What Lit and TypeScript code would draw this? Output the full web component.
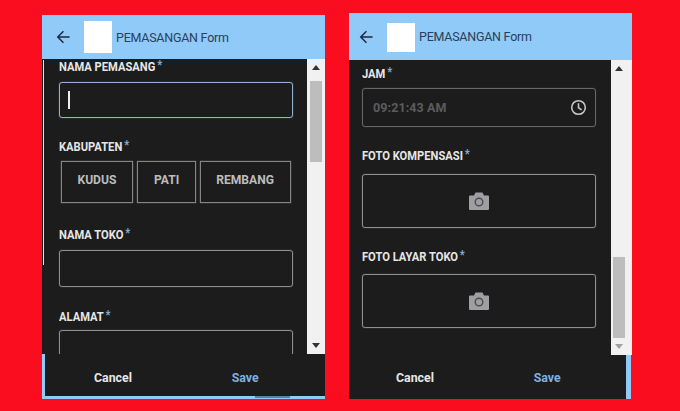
import { LitElement, html, css, svg } from "lit";
import { customElement } from "lit/decorators.js";

const back = html`<svg class="back" viewBox="0 0 16 16" width="14" height="14"><path d="M15.500 8H2M8.500 1.500L2 8l6.500 6.500" fill="none" stroke="#1b2a3d" stroke-width="1.700"/></svg>`;
const camera = html`<svg viewBox="0 0 20 18" width="20" height="18"><path fill="#9f9fa3" d="M1 3.500h4l1.500-3h7l1.500 3h4a1 1 0 0 1 1 1V17a1 1 0 0 1-1 1H1a1 1 0 0 1-1-1V4.500a1 1 0 0 1 1-1z"/><circle cx="10" cy="10" r="3.800" fill="none" stroke="#4c4c50" stroke-width="1.400"/></svg>`;
const clock = html`<svg viewBox="0 0 18 18" width="17" height="17"><circle cx="9" cy="9" r="7.200" fill="none" stroke="#c4c4c4" stroke-width="1.700"/><path d="M9 4.500V9.300l3.300 2.200" fill="none" stroke="#c4c4c4" stroke-width="1.700"/></svg>`;
const tri = (up: boolean, c: string) => html`<svg viewBox="0 0 8 5" width="8" height="5">${svg`<path fill=${c} d=${up ? "M4 0l4 5H0z" : "M0 0h8L4 5z"}/>`}</svg>`;

@customElement("app-root")
export class AppRoot extends LitElement {
  static styles = css`
    :host { display: block; width: 680px; height: 411px; background: #fb0d20; overflow: hidden; font-family: Roboto, "Liberation Sans", sans-serif; }
    .page { display: flex; align-items: flex-start; padding-left: 42px; gap: 24px; }
    .panel { position: relative; width: 283px; display: flex; flex-direction: column; }
    .a { margin-top: 15px; height: 384px; }
    .b { margin-top: 13px; height: 386px; }
    header { flex: none; display: flex; align-items: center; background: #90caf9; color: #2b4058; font-size: 12.500px; letter-spacing: -.25px; }
    .a header { height: 44px; padding-left: 14px; }
    .b header { height: 47px; padding-left: 10px; }
    .back { flex: none; margin-right: 14px; }
    .logo { flex: none; background: #fff; margin-right: 4px; }
    .a .logo { width: 28px; height: 32px; }
    .b .logo { width: 28px; height: 29px; margin-top: 2px; }
    .main { flex: none; height: 295px; display: flex; }
    .scroll-body { flex: 1; min-width: 0; overflow: hidden; background: #1c1c1c; padding: 1px 14px 0 17px; }
    .b .scroll-body { padding: 7px 15px 0 13px; }
    .bar { flex: none; width: 18px; box-sizing: border-box; background: #f1f1f1; display: flex; flex-direction: column; align-items: center; }
    .b .bar { width: 21px; padding-right: 5px; }
    .arrow { flex: none; height: 17px; display: flex; align-items: center; justify-content: center; }
    .track { flex: 1; width: 100%; display: flex; flex-direction: column; padding: 0 3px; box-sizing: border-box; }
    .b .track { padding: 0 2px; }
    .thumb { background: #bdbdbd; height: 81px; margin-top: 5px; }
    .b .thumb { margin-top: auto; }
    .label { font-size: 12px; font-weight: 700; color: #e6e6e6; height: 14px; line-height: 14px; white-space: nowrap; transform: scaleX(.93); transform-origin: left; }
    .label span { color: #7fb0dc; margin-left: 2px; position: relative; top: -2px; }
    .field { height: 37px; box-sizing: border-box; border: 1px solid #8e8e8e; box-shadow: 0 0 1px #8e8e8e; border-radius: 3px; margin: 8px 0 23px; display: flex; align-items: center; padding: 0 10px; }
    .focus { height: 36px; margin-bottom: 22px; border-color: #93b0cc; box-shadow: 0 0 1px #93b0cc; padding-left: 8px; }
    .caret { width: 1.500px; height: 18px; background: #eee; }
    .clip { height: 60px; margin: 6px 0 0; }
    .group { display: flex; gap: 4px; padding: 0 2px; margin: 7px 0 25px; }
    .group div { height: 42px; box-sizing: border-box; border: 1px solid #858585; box-shadow: 0 0 1px #858585; display: flex; align-items: center; justify-content: center; color: #bdbdbd; font-size: 13px; font-weight: 700; padding-bottom: 6px; }
    .group span { transform: scaleX(.93); }
    .time { height: 39px; margin: 7px 0 22px; border-color: #666; box-shadow: 0 0 1px #666; justify-content: space-between; color: #5c5c5c; font-size: 12.500px; font-weight: 700; letter-spacing: .1px; padding: 0 8px 0 10px; }
    .photo { height: 54px; margin: 11px 0 22px; justify-content: center; border-color: #909090; box-shadow: 0 0 1px #909090; padding-right: 10px; }
    .second { margin-top: 10px; }
    footer { flex: none; display: grid; grid-template-columns: 132px 132px; align-items: center; box-sizing: border-box; background: #1c1c1c; font-size: 13px; font-weight: 700; color: #e6e6e6; }
    .a footer { height: 45px; padding: 4px 0 0 2px; border-left: 3px solid #90caf9; border-bottom: 3px solid #90caf9; }
    .b footer { height: 44px; padding-top: 1px; margin-right: 1px; border-right: 5px solid #90caf9; }
    footer div { justify-self: center; transform: scaleX(.95); }
    footer .save { color: #7fb0e0; }
    .edge { position: absolute; left: 1px; top: 45px; width: 1px; height: 205px; background: #cfe8dc; }
    .tab { position: absolute; left: 213px; bottom: 1px; width: 35px; height: 2px; background: #5f7f9f; }
  `;

  private label(t: string) { return html`<div class="label">${t}<span>*</span></div>`; }

  render() {
    return html`<div class="page">
      <section class="panel a">
        <header>${back}<div class="logo"></div>PEMASANGAN Form</header>
        <div class="main">
          <div class="scroll-body">
            ${this.label("NAMA PEMASANG")}
            <div class="field focus"><div class="caret"></div></div>
            ${this.label("KABUPATEN")}
            <div class="group">
              <div style="width:72px"><span>KUDUS</span></div><div style="width:59px"><span>PATI</span></div><div style="width:91px"><span>REMBANG</span></div>
            </div>
            ${this.label("NAMA TOKO")}
            <div class="field"></div>
            ${this.label("ALAMAT")}
            <div class="field clip"></div>
          </div>
          <div class="bar">
            <div class="arrow">${tri(true, "#333")}</div>
            <div class="track"><div class="thumb"></div></div>
            <div class="arrow">${tri(false, "#333")}</div>
          </div>
        </div>
        <footer><div>Cancel</div><div class="save">Save</div></footer>
        <div class="edge"></div>
        <div class="tab"></div>
      </section>
      <section class="panel b">
        <header>${back}<div class="logo"></div>PEMASANGAN Form</header>
        <div class="main">
          <div class="scroll-body">
            ${this.label("JAM")}
            <div class="field time"><span>09:21:43 AM</span>${clock}</div>
            ${this.label("FOTO KOMPENSASI")}
            <div class="field photo">${camera}</div>
            ${this.label("FOTO LAYAR TOKO")}
            <div class="field photo second">${camera}</div>
          </div>
          <div class="bar">
            <div class="arrow">${tri(true, "#333")}</div>
            <div class="track"><div class="thumb"></div></div>
            <div class="arrow">${tri(false, "#a0a0a0")}</div>
          </div>
        </div>
        <footer><div>Cancel</div><div class="save">Save</div></footer>
      </section>
    </div>`;
  }
}
